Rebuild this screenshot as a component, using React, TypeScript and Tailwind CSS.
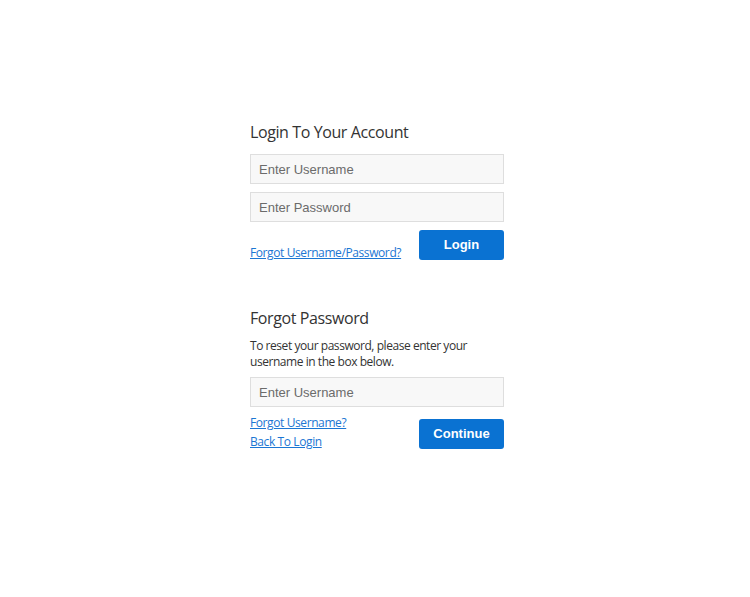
import React from "react";

const sans = { fontFamily: '"Open Sans", "Noto Sans", sans-serif' };

function Field({ placeholder, type = "text" }: { placeholder: string; type?: string }) {
  return (
    <input
      type={type}
      placeholder={placeholder}
      className="box-border block h-[30px] w-full border border-[#dedede] bg-[#f8f8f8] px-[8px] text-[13px] text-[#555] placeholder:text-[#6b6b6b] outline-none"
      style={{ fontFamily: '"Liberation Sans", Arial, sans-serif' }}
    />
  );
}

function Btn({ label }: { label: string }) {
  return (
    <button
      className="h-[30px] w-[85px] rounded-[3px] bg-[#0a72d2] text-[13px] font-bold text-white"
      style={{ fontFamily: '"Liberation Sans", Arial, sans-serif' }}
    >
      {label}
    </button>
  );
}

export default function App() {
  return (
    <div className="min-h-[597px] w-full bg-white" style={sans}>
      <div className="ml-[250px] w-[254px] pt-[120px]">
        <h2 className="text-[16px] leading-[24px] tracking-[-0.4px] text-[#333]">Login To Your Account</h2>
        <div className="mt-[10px] flex flex-col gap-[8px]">
          <Field placeholder="Enter Username" />
          <Field placeholder="Enter Password" type="password" />
        </div>
        <div className="mt-[8px] flex h-[30px] items-start justify-between">
          <a
            href="#"
            className="mt-[14px] whitespace-nowrap text-[12px] leading-[17px] tracking-[-0.4px] text-[#1b76d3] underline"
          >
            Forgot Username/Password?
          </a>
          <Btn label="Login" />
        </div>

        <h2 className="mt-[46px] text-[16px] leading-[24px] tracking-[-0.4px] text-[#333]">Forgot Password</h2>
        <p className="mt-[8px] text-[12px] leading-[16px] tracking-[-0.45px] text-[#333]">
          To reset your password, please enter your
          <br />
          username in the box below.
        </p>
        <div className="mt-[7px]">
          <Field placeholder="Enter Username" />
        </div>
        <div className="flex items-start justify-between">
          <div className="mt-[7px] flex flex-col gap-[1px] text-[12px] leading-[18px] tracking-[-0.4px]">
            <a href="#" className="text-[#1b76d3] underline">Forgot Username?</a>
            <a href="#" className="text-[#1b76d3] underline">Back To Login</a>
          </div>
          <div className="mt-[12px]">
            <Btn label="Continue" />
          </div>
        </div>
      </div>
    </div>
  );
}
